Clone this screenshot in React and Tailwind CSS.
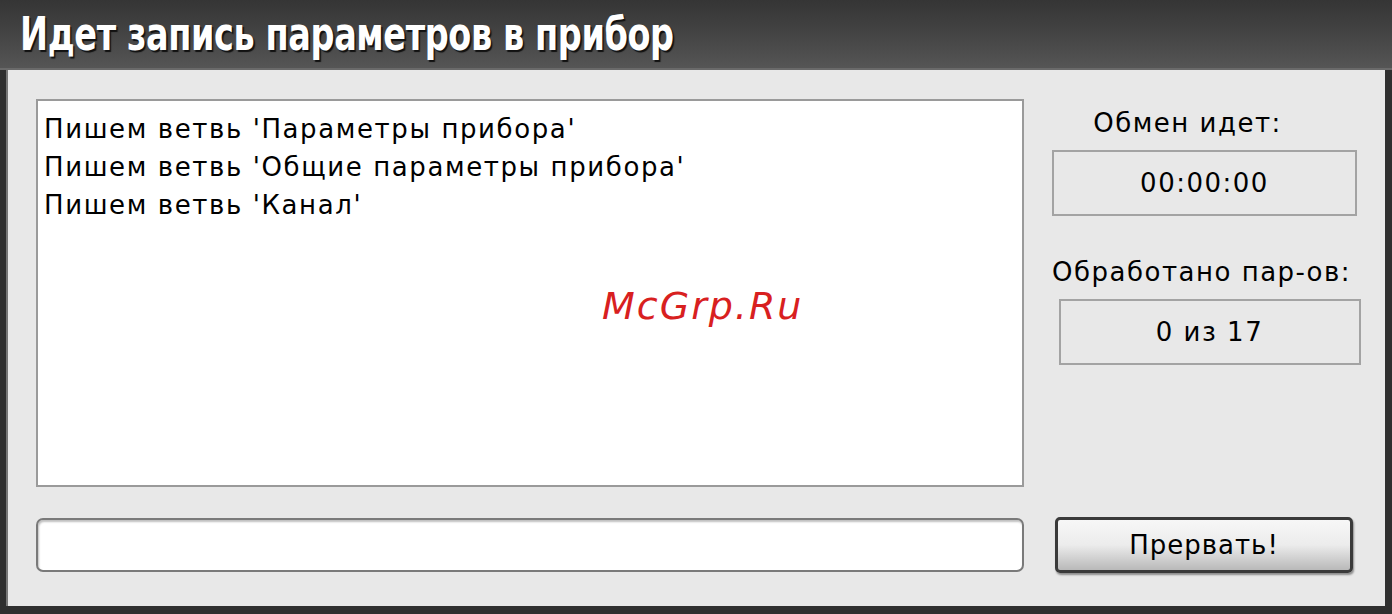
export default function App() {
  const lines = [
    "Пишем ветвь 'Параметры прибора'",
    "Пишем ветвь 'Общие параметры прибора'",
    "Пишем ветвь 'Канал'",
  ];

  return (
    <div className="w-[1392px] h-[614px] bg-[#2f2f2f] flex flex-col overflow-hidden [font-family:'DejaVu_Sans',sans-serif] text-black">
      {/* title bar */}
      <div className="h-[70px] shrink-0 bg-gradient-to-b from-[#353535] via-[#444] to-[#555] border-b-2 border-[#6a6a6a] flex items-center pl-[20px]">
        <h1 className="text-white font-bold text-[46px] leading-none tracking-[-0.5px] origin-left scale-x-[0.81] whitespace-nowrap [font-family:'DejaVu_Sans_Condensed','DejaVu_Sans',sans-serif] [text-shadow:2px_2px_1px_#111]">
          Идет запись параметров в прибор
        </h1>
      </div>

      {/* body */}
      <div className="flex-1 ml-[6px] mr-[7px] mb-[8px] bg-[#e8e8e8] border-l-2 border-[#777] flex flex-col pl-[28px] pt-[29px]">
        <div className="flex">
          <div className="relative w-[988px] h-[388px] bg-white border-2 border-[#9a9a9a] pl-[6px] pt-[9px] text-[26px] leading-[38px] tracking-[1.6px]">
            {lines.map((l) => (
              <div key={l}>{l}</div>
            ))}
            <div className="absolute left-[564px] top-[186px] text-[#d8201f] italic text-[38px] tracking-[2px]">
              McGrp.Ru
            </div>
          </div>

          <div className="flex-1 flex flex-col items-center text-[26px] tracking-[1.5px]">
            <div className="mt-[4px] h-[40px] leading-[40px] mr-[34px]">Обмен идет:</div>
            <div className="mt-[7px] w-[305px] h-[66px] border-2 border-[#a3a3a3] flex items-center justify-center">
              00:00:00
            </div>
            <div className="mt-[36px] h-[40px] leading-[40px] mr-[6px]">Обработано пар-ов:</div>
            <div className="mt-[7px] ml-[10px] w-[302px] h-[66px] border-2 border-[#a3a3a3] flex items-center justify-center">
              0 из 17
            </div>
          </div>
        </div>

        <div className="flex items-center mt-[30px]">
          <div className="w-[988px] h-[54px] bg-white border-2 border-[#7a7a7a] rounded-[7px] shadow-[inset_1px_2px_2px_rgba(0,0,0,0.25)]"></div>
          <button className="ml-[31px] w-[298px] h-[56px] rounded-[5px] border-[3px] border-[#3a3a3a] bg-gradient-to-b from-[#f7f7f7] via-[#ececec] to-[#b9b9b9] text-[26px] tracking-[1px] shadow-[1px_2px_2px_rgba(0,0,0,0.4)]">
            Прервать!
          </button>
        </div>
      </div>
    </div>
  );
}
